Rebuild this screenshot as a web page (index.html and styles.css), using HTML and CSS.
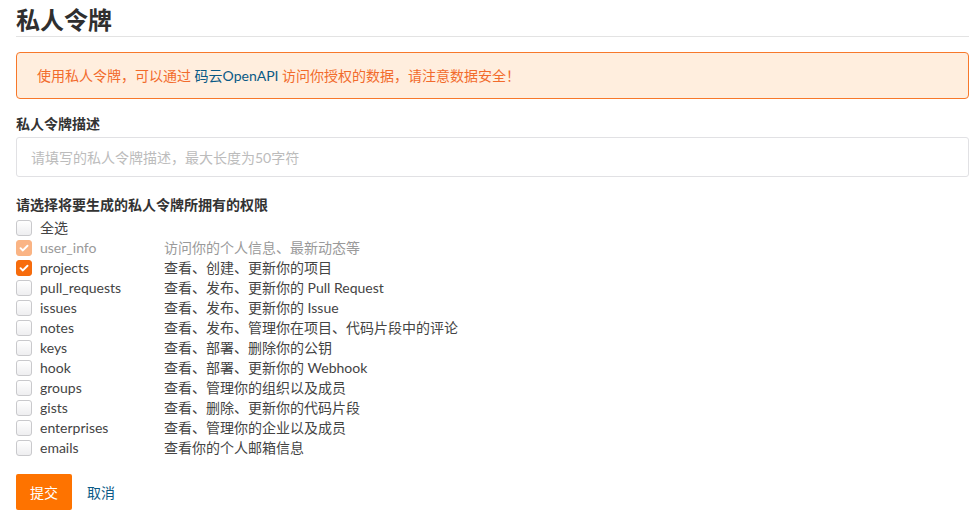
FILE: index.html
```html
<!DOCTYPE html>
<html lang="zh">
<head>
<meta charset="utf-8">
<title>私人令牌</title>
<link rel="stylesheet" href="styles.css">
</head>
<body>
<div class="page">
  <h1 class="title">私人令牌</h1>
  <div class="alert">使用私人令牌，可以通过 <a class="link" href="#">码云OpenAPI</a> 访问你授权的数据，请注意数据安全！</div>
  <div class="label label-desc">私人令牌描述</div>
  <div class="input"><span class="placeholder">请填写的私人令牌描述，最大长度为50字符</span></div>
  <div class="label label-perm">请选择将要生成的私人令牌所拥有的权限</div>
  <div class="perms">
    <div class="row"><span class="box"></span><span class="name">全选</span></div>
    <div class="row disabled"><span class="box checked"><svg viewBox="0 0 16 16" class="tick"><path d="M4 8.2l2.7 2.6L12 5.4" /></svg></span><span class="name">user_info</span><span class="desc">访问你的个人信息、最新动态等</span></div>
    <div class="row"><span class="box checked"><svg viewBox="0 0 16 16" class="tick"><path d="M4 8.2l2.7 2.6L12 5.4" /></svg></span><span class="name">projects</span><span class="desc">查看、创建、更新你的项目</span></div>
    <div class="row"><span class="box"></span><span class="name">pull_requests</span><span class="desc">查看、发布、更新你的 Pull Request</span></div>
    <div class="row"><span class="box"></span><span class="name">issues</span><span class="desc">查看、发布、更新你的 Issue</span></div>
    <div class="row"><span class="box"></span><span class="name">notes</span><span class="desc">查看、发布、管理你在项目、代码片段中的评论</span></div>
    <div class="row"><span class="box"></span><span class="name">keys</span><span class="desc">查看、部署、删除你的公钥</span></div>
    <div class="row"><span class="box"></span><span class="name">hook</span><span class="desc">查看、部署、更新你的 Webhook</span></div>
    <div class="row"><span class="box"></span><span class="name">groups</span><span class="desc">查看、管理你的组织以及成员</span></div>
    <div class="row"><span class="box"></span><span class="name">gists</span><span class="desc">查看、删除、更新你的代码片段</span></div>
    <div class="row"><span class="box"></span><span class="name">enterprises</span><span class="desc">查看、管理你的企业以及成员</span></div>
    <div class="row"><span class="box"></span><span class="name">emails</span><span class="desc">查看你的个人邮箱信息</span></div>
  </div>
  <div class="actions">
    <button class="btn-submit">提交</button>
    <a class="cancel" href="#">取消</a>
  </div>
</div>
</body>
</html>
```

FILE: styles.css
```css
html, body {
  margin: 0;
  padding: 0;
  background: #fff;
}
body {
  font-family: Lato, "Noto Sans CJK SC", sans-serif;
  font-size: 14px;
  color: #333;
}
.page {
  padding: 0 7px 0 16px;
}
.title {
  margin: 3px 0 0;
  padding: 0 0 1px;
  font-size: 24px;
  line-height: 32px;
  font-weight: 700;
  color: #2f2f2f;
  border-bottom: 1px solid #e3e3e3;
  font-family: "Noto Sans CJK SC", sans-serif;
}
.alert {
  margin-top: 15px;
  padding: 12px 20px;
  line-height: 21px;
  border: 1px solid #f7782a;
  border-radius: 4px;
  background: #ffeede;
  color: #f26b2c;
}
.link {
  color: #0a5a86;
  text-decoration: none;
}
.label {
  font-weight: 700;
  line-height: 20px;
  color: #333;
}
.label-desc {
  margin-top: 15px;
}
.input {
  margin-top: 3px;
  height: 38px;
  border: 1px solid #e1e1e4;
  border-radius: 3px;
  padding: 0 14px;
  display: flex;
  align-items: center;
}
.placeholder {
  color: #bcbcbc;
}
.label-perm {
  margin-top: 18px;
}
.perms {
  margin-top: 3px;
}
.row {
  display: flex;
  align-items: center;
  height: 20px;
  line-height: 20px;
  color: #444;
}
.box {
  box-sizing: border-box;
  width: 16px;
  height: 16px;
  border: 1px solid #c9c9cc;
  border-radius: 3px;
  background: linear-gradient(#ffffff, #eeeef0);
  flex: none;
  display: flex;
  align-items: center;
  justify-content: center;
}
.box.checked {
  border-color: #f56b0c;
  background: #f76c0d;
}
.tick {
  width: 14px;
  height: 14px;
  fill: none;
  stroke: #fff;
  stroke-width: 2.2;
  stroke-linecap: round;
  stroke-linejoin: round;
}
.disabled {
  color: #9a9a9a;
}
.disabled .box.checked {
  opacity: 0.5;
}
.name {
  margin-left: 8px;
  width: 124px;
  flex: none;
}
.desc {
  white-space: nowrap;
}
.actions {
  margin-top: 16px;
  display: flex;
  align-items: center;
}
.btn-submit {
  width: 56px;
  height: 36px;
  border: none;
  border-radius: 2px;
  background: #fe7300;
  color: #fff;
  font-family: "Noto Sans CJK SC", sans-serif;
  font-size: 14px;
  padding: 0;
}
.cancel {
  margin-left: 15px;
  color: #0a5a86;
  text-decoration: none;
}
```
